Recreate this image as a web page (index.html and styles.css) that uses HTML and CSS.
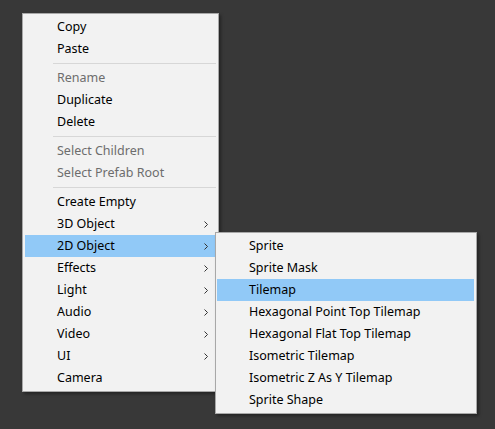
FILE: index.html
```html
<!DOCTYPE html>
<html>
<head>
<meta charset="utf-8">
<link rel="stylesheet" href="styles.css">
</head>
<body>
<div class="menu main">
  <div class="item">Copy</div>
  <div class="item">Paste</div>
  <div class="sep"></div>
  <div class="item disabled">Rename</div>
  <div class="item">Duplicate</div>
  <div class="item">Delete</div>
  <div class="sep"></div>
  <div class="item disabled">Select Children</div>
  <div class="item disabled">Select Prefab Root</div>
  <div class="sep"></div>
  <div class="item">Create Empty</div>
  <div class="item sub">3D Object<svg class="chev" width="4" height="7" viewBox="0 0 4 7"><path d="M0.5 0.5 L3.5 3.5 L0.5 6.5" fill="none" stroke="#333" stroke-width="1"/></svg></div>
  <div class="item sub active">2D Object<svg class="chev" width="4" height="7" viewBox="0 0 4 7"><path d="M0.5 0.5 L3.5 3.5 L0.5 6.5" fill="none" stroke="#333" stroke-width="1"/></svg>
    <div class="menu submenu">
      <div class="item">Sprite</div>
      <div class="item">Sprite Mask</div>
      <div class="item active">Tilemap</div>
      <div class="item">Hexagonal Point Top Tilemap</div>
      <div class="item">Hexagonal Flat Top Tilemap</div>
      <div class="item">Isometric Tilemap</div>
      <div class="item">Isometric Z As Y Tilemap</div>
      <div class="item">Sprite Shape</div>
    </div>
  </div>
  <div class="item sub">Effects<svg class="chev" width="4" height="7" viewBox="0 0 4 7"><path d="M0.5 0.5 L3.5 3.5 L0.5 6.5" fill="none" stroke="#333" stroke-width="1"/></svg></div>
  <div class="item sub">Light<svg class="chev" width="4" height="7" viewBox="0 0 4 7"><path d="M0.5 0.5 L3.5 3.5 L0.5 6.5" fill="none" stroke="#333" stroke-width="1"/></svg></div>
  <div class="item sub">Audio<svg class="chev" width="4" height="7" viewBox="0 0 4 7"><path d="M0.5 0.5 L3.5 3.5 L0.5 6.5" fill="none" stroke="#333" stroke-width="1"/></svg></div>
  <div class="item sub">Video<svg class="chev" width="4" height="7" viewBox="0 0 4 7"><path d="M0.5 0.5 L3.5 3.5 L0.5 6.5" fill="none" stroke="#333" stroke-width="1"/></svg></div>
  <div class="item sub">UI<svg class="chev" width="4" height="7" viewBox="0 0 4 7"><path d="M0.5 0.5 L3.5 3.5 L0.5 6.5" fill="none" stroke="#333" stroke-width="1"/></svg></div>
  <div class="item">Camera</div>
</div>
</body>
</html>
```
FILE: styles.css
```css
html, body {
  margin: 0;
  padding: 0;
  background: #383838;
  width: 495px;
  height: 429px;
  overflow: hidden;
}
body {
  padding: 13px 0 0 22px;
  box-sizing: border-box;
  font-family: "Noto Sans", "Liberation Sans", sans-serif;
  font-size: 12.5px;
  color: #000;
}
.menu {
  background: #f2f2f2;
  border: 1px solid #a8a8a8;
  padding: 2px;
  box-shadow: 2px 2px 3px rgba(0, 0, 0, 0.35);
}
.main {
  width: 191px;
}
.item {
  height: 22px;
  line-height: 22px;
  padding-left: 32px;
  display: flex;
  align-items: center;
  white-space: nowrap;
  position: relative;
}
.item.disabled {
  color: #6d6d6d;
}
.item.active {
  background: #91c9f7;
}
.chev {
  margin-left: auto;
  margin-right: 8px;
}
.sep {
  height: 1px;
  background: #d7d7d7;
  margin: 3px 0 3px 28px;
}
.submenu {
  position: absolute;
  left: 190px;
  top: -3px;
  width: 257px;
  padding: 2px 2px 2px 1px;
  z-index: 2;
}
.submenu .item {
  padding-left: 32px;
}
```
